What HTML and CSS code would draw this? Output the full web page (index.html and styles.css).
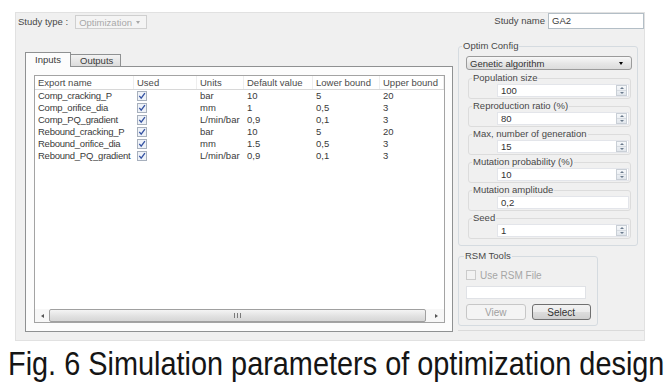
FILE: index.html
```html
<!DOCTYPE html>
<html>
<head>
<meta charset="utf-8">
<title>Study</title>
<link rel="stylesheet" href="styles.css">
</head>
<body>
<div class="panel">
  <div class="toprow">
    <div class="study-type">
      <span class="lbl">Study type :</span>
      <div class="combo combo-dis"><span>Optimization</span><span class="caret"></span></div>
    </div>
    <div class="study-name">
      <span class="lbl">Study name</span>
      <div class="namefield">GA2</div>
    </div>
  </div>
  <div class="main">
    <div class="tabs">
      <div class="tabbar">
        <div class="tab active">Inputs</div>
        <div class="tab">Outputs</div>
        <div class="tabfill"></div>
      </div>
      <div class="pane">
        <div class="table">
          <div class="trow thead">
            <div class="c">Export name</div>
            <div class="c">Used</div>
            <div class="c">Units</div>
            <div class="c">Default value</div>
            <div class="c">Lower bound</div>
            <div class="c">Upper bound</div>
          </div>
          <div class="tbody">
            <div class="trow">
              <div class="c name">Comp_cracking_P</div>
              <div class="c"><span class="cb"><svg width="10" height="10" viewBox="0 0 10 10"><rect x="0.5" y="0.5" width="9" height="9" fill="#eef2f8" stroke="#a7b0bd"/><path d="M2.3 4.8 L4.2 7.2 L7.9 2.1" fill="none" stroke="#3553a3" stroke-width="1.3"/></svg></span></div>
              <div class="c">bar</div>
              <div class="c">10</div>
              <div class="c">5</div>
              <div class="c">20</div>
            </div>
            <div class="trow">
              <div class="c name">Comp_orifice_dia</div>
              <div class="c"><span class="cb"><svg width="10" height="10" viewBox="0 0 10 10"><rect x="0.5" y="0.5" width="9" height="9" fill="#eef2f8" stroke="#a7b0bd"/><path d="M2.3 4.8 L4.2 7.2 L7.9 2.1" fill="none" stroke="#3553a3" stroke-width="1.3"/></svg></span></div>
              <div class="c">mm</div>
              <div class="c">1</div>
              <div class="c">0,5</div>
              <div class="c">3</div>
            </div>
            <div class="trow">
              <div class="c name">Comp_PQ_gradient</div>
              <div class="c"><span class="cb"><svg width="10" height="10" viewBox="0 0 10 10"><rect x="0.5" y="0.5" width="9" height="9" fill="#eef2f8" stroke="#a7b0bd"/><path d="M2.3 4.8 L4.2 7.2 L7.9 2.1" fill="none" stroke="#3553a3" stroke-width="1.3"/></svg></span></div>
              <div class="c">L/min/bar</div>
              <div class="c">0,9</div>
              <div class="c">0,1</div>
              <div class="c">3</div>
            </div>
            <div class="trow">
              <div class="c name">Rebound_cracking_P</div>
              <div class="c"><span class="cb"><svg width="10" height="10" viewBox="0 0 10 10"><rect x="0.5" y="0.5" width="9" height="9" fill="#eef2f8" stroke="#a7b0bd"/><path d="M2.3 4.8 L4.2 7.2 L7.9 2.1" fill="none" stroke="#3553a3" stroke-width="1.3"/></svg></span></div>
              <div class="c">bar</div>
              <div class="c">10</div>
              <div class="c">5</div>
              <div class="c">20</div>
            </div>
            <div class="trow">
              <div class="c name">Rebound_orifice_dia</div>
              <div class="c"><span class="cb"><svg width="10" height="10" viewBox="0 0 10 10"><rect x="0.5" y="0.5" width="9" height="9" fill="#eef2f8" stroke="#a7b0bd"/><path d="M2.3 4.8 L4.2 7.2 L7.9 2.1" fill="none" stroke="#3553a3" stroke-width="1.3"/></svg></span></div>
              <div class="c">mm</div>
              <div class="c">1.5</div>
              <div class="c">0,5</div>
              <div class="c">3</div>
            </div>
            <div class="trow">
              <div class="c name">Rebound_PQ_gradient</div>
              <div class="c"><span class="cb"><svg width="10" height="10" viewBox="0 0 10 10"><rect x="0.5" y="0.5" width="9" height="9" fill="#eef2f8" stroke="#a7b0bd"/><path d="M2.3 4.8 L4.2 7.2 L7.9 2.1" fill="none" stroke="#3553a3" stroke-width="1.3"/></svg></span></div>
              <div class="c">L/min/bar</div>
              <div class="c">0,9</div>
              <div class="c">0,1</div>
              <div class="c">3</div>
            </div>
          </div>
          <div class="hscroll">
            <div class="sbtn"><span class="arr-l"></span></div>
            <div class="thumb"><span class="grip"><i></i><i></i><i></i></span></div>
            <div class="sbtn sbtn-r"><span class="arr-r"></span></div>
          </div>
        </div>
      </div>
    </div>
    <div class="side">
      <fieldset class="group optim">
        <legend>Optim Config</legend>
        <div class="gbody optim-body">
          <div class="combo combo-en"><span>Genetic algorithm</span><span class="caret"></span></div>
          <fieldset class="sub first">
            <legend>Population size</legend>
            <div class="input"><span>100</span><span class="spin"><i class="up"></i><i class="dn"></i></span></div>
          </fieldset>
          <fieldset class="sub">
            <legend>Reproduction ratio (%)</legend>
            <div class="input"><span>80</span><span class="spin"><i class="up"></i><i class="dn"></i></span></div>
          </fieldset>
          <fieldset class="sub">
            <legend>Max, number of generation</legend>
            <div class="input"><span>15</span><span class="spin"><i class="up"></i><i class="dn"></i></span></div>
          </fieldset>
          <fieldset class="sub">
            <legend>Mutation probability (%)</legend>
            <div class="input"><span>10</span><span class="spin"><i class="up"></i><i class="dn"></i></span></div>
          </fieldset>
          <fieldset class="sub">
            <legend>Mutation amplitude</legend>
            <div class="input"><span>0,2</span></div>
          </fieldset>
          <fieldset class="sub">
            <legend>Seed</legend>
            <div class="input"><span>1</span><span class="spin"><i class="up"></i><i class="dn"></i></span></div>
          </fieldset>
        </div>
      </fieldset>
      <fieldset class="group rsm">
        <legend>RSM Tools</legend>
        <div class="gbody rsm-body">
          <div class="chkrow"><span class="dcb"></span><span>Use RSM File</span></div>
          <div class="rsmfield"></div>
          <div class="btns">
            <div class="btn btn-dis">View</div>
            <div class="btn">Select</div>
          </div>
        </div>
      </fieldset>
    </div>
  </div>
</div>
<div class="caption"><span class="captext">Fig. 6 Simulation parameters of optimization design</span></div>
</body>
</html>
```

FILE: styles.css
```css
* { box-sizing: border-box; }
html, body { margin: 0; padding: 0; background: #fff; }
body {
  width: 671px;
  height: 390px;
  overflow: hidden;
  font-family: "Liberation Sans", Arial, sans-serif;
  font-size: 9.5px;
  color: #484848;
}

.panel {
  margin: 12px 0 0 15px;
  width: 630px;
  height: 329px;
  background: #f0f0f0;
  border: 1px solid #e1e1e1;
  display: flex;
  flex-direction: column;
}

/* top row */
.toprow {
  display: flex;
  justify-content: space-between;
  align-items: flex-start;
  padding-left: 2px;
  height: 16px;
}
.lbl { line-height: 14px; white-space: nowrap; }
.study-type {
  display: flex;
  align-items: center;
  margin-top: 2px;
  height: 14px;
}
.combo {
  display: flex;
  align-items: center;
  height: 14px;
  padding: 0 5px 0 3px;
  white-space: nowrap;
}
.combo .caret {
  margin-left: auto;
  width: 0;
  height: 0;
  border-left: 2.5px solid transparent;
  border-right: 2.5px solid transparent;
  border-top: 3px solid #000;
}
.combo-dis {
  margin-left: 7px;
  width: 72px;
  border: 1px solid #cfcfcf;
  background: #f4f4f4;
  color: #a8a8a8;
}
.combo-dis .caret { border-top-color: #a8a8a8; margin-right: 1px; }
.study-name {
  display: flex;
  align-items: center;
  height: 16px;
}
.study-name .lbl { line-height: 16px; margin-right: 3px; }
.namefield {
  width: 96px;
  height: 16px;
  line-height: 14px;
  padding-left: 3px;
  background: #fff;
  border: 1px solid #b3bec6;
  color: #3a3a3a;
}

/* main */
.main {
  display: flex;
  align-items: flex-start;
  margin-top: 12px;
  padding-left: 9px;
}

/* tabs */
.tabs {
  width: 428px;
  margin-top: 11px;
}
.tabbar {
  display: flex;
  align-items: flex-end;
  height: 15px;
}
.tab {
  white-space: nowrap;
  color: #3a3a3a;
}
.tab.active {
  width: 46px;
  height: 15px;
  line-height: 14px;
  padding-left: 9px;
  background: #fcfcfc;
  border: 1px solid #8f9192;
  border-bottom: none;
}
.tab:not(.active) {
  width: 50px;
  height: 13px;
  line-height: 11px;
  padding-left: 9px;
  background: linear-gradient(#f3f3f3, #dcdcdc);
  border: 1px solid #8f9192;
  border-left: none;
}
.tabfill {
  flex: 1;
  height: 1px;
  background: #8f9192;
}
.pane {
  height: 265px;
  background: #fcfcfc;
  border: 1px solid #8f9192;
  border-top: none;
  padding: 8px 7px 8px 8px;
}

/* table */
.table {
  height: 248px;
  border: 1px solid #a3a3a3;
  background: #fff;
  display: flex;
  flex-direction: column;
  color: #3a3a3a;
}
.trow {
  display: grid;
  grid-template-columns: 99px 63px 47px 69px 67px 1fr;
  height: 12px;
  line-height: 12px;
}
.thead {
  height: 14px;
  line-height: 13px;
  border-bottom: 1px solid #d8d8d8;
  color: #4a4a4a;
}
.thead .c { border-right: 1px solid #eeeeee; }
.c {
  padding-left: 3px;
  white-space: nowrap;
  overflow: visible;
  min-width: 0;
}
.c.name { letter-spacing: -0.25px; }
.tbody { flex: 1; }
.cb {
  display: flex;
  align-items: center;
  height: 12px;
}
.cb svg { display: block; }

/* scrollbar */
.hscroll {
  height: 13px;
  display: flex;
  background: #f7f7f7;
}
.sbtn {
  width: 14px;
  display: flex;
  align-items: center;
  justify-content: center;
}
.sbtn-r { flex: 1; }
.arr-l, .arr-r {
  width: 0; height: 0;
  border-top: 2.5px solid transparent;
  border-bottom: 2.5px solid transparent;
}
.arr-l { border-right: 3px solid #555; }
.arr-r { border-left: 3px solid #555; margin-left: 2px; }
.thumb {
  width: 377px;
  border: 1px solid #a0a0a0;
  border-radius: 2px;
  background: linear-gradient(#f4f4f4, #e0e0e0 60%, #d6d6d6);
  display: flex;
  align-items: center;
  justify-content: center;
}
.grip { display: flex; gap: 2px; height: 5px; }
.grip i { width: 1px; background: #7a7a7a; }

/* side */
.side {
  width: 186px;
  height: 290px;
  margin-left: 5px;
  display: flex;
  flex-direction: column;
  align-items: flex-start;
  border-bottom: 1px solid #dadada;
}
fieldset {
  margin: 0;
  padding: 0;
  min-width: 0;
  border: 1px solid #d5dbe0;
  border-radius: 3px;
}
legend {
  padding: 0 1px;
  line-height: 10px;
  font-size: 9.5px;
  color: #484848;
  white-space: nowrap;
}
.group.optim { width: 180px; }
.group.optim > legend { margin-left: 3px; }
.optim-body { padding: 5px 5px 6px 7px; }
.combo-en {
  width: 100%;
  border: 1px solid #9b9b9b;
  border-radius: 3px;
  background: linear-gradient(#f8f8f8, #e6e6e6 55%, #dcdcdc);
  color: #333;
  padding-right: 8px;
}
.sub {
  margin: 2px 1px 0 2px;
  padding: 1px 0 1px 0;
  height: 26px;
  border-color: #dcdcdc;
}
.sub.first { margin-top: 3px; }
.sub > legend { margin-left: 3px; }
.input {
  margin-left: 28px;
  margin-right: 1px;
  height: 13px;
  background: #fff;
  border: 1px solid #e3e5ea;
  display: flex;
  align-items: center;
  padding-left: 3px;
  color: #333;
  line-height: 11px;
}
.spin {
  margin-left: auto;
  margin-right: 1px;
  width: 11px;
  height: 11px;
  display: flex;
  flex-direction: column;
  border: 1px solid #c9cfd6;
  background: linear-gradient(#f6f8fa, #e1e6ec);
}
.spin i {
  flex: 1;
  display: flex;
  align-items: center;
  justify-content: center;
}
.spin i::before {
  content: "";
  width: 0; height: 0;
  border-left: 2px solid transparent;
  border-right: 2px solid transparent;
}
.spin .up::before { border-bottom: 2px solid #6a7a8c; }
.spin .dn::before { border-top: 2px solid #6a7a8c; }
.spin .up { border-bottom: 1px solid #d6dbe1; }

.group.rsm { width: 140px; margin-top: 5px; }
.group.rsm > legend { margin-left: 5px; }
.rsm-body { padding: 8px 6px 5px 7px; }
.chkrow {
  display: flex;
  align-items: center;
  height: 12px;
  color: #a6a6a6;
  font-size: 10px;
}
.dcb {
  width: 10px;
  height: 10px;
  border: 1px solid #cbcbcb;
  background: #f2f2f2;
  margin-right: 4px;
}
.rsmfield {
  margin-top: 5px;
  width: 120px;
  height: 13px;
  background: #fff;
  border: 1px solid #e0e2e6;
}
.btns {
  margin-top: 5px;
  display: flex;
  gap: 6px;
}
.btn {
  width: 60px;
  height: 16px;
  border: 1px solid #707070;
  border-radius: 3px;
  background: linear-gradient(#f2f2f2, #ebebeb 50%, #dddddd 51%, #cfcfcf);
  display: flex;
  align-items: center;
  justify-content: center;
  color: #333;
  font-size: 10px;
}
.btn-dis {
  border-color: #c7c7c7;
  background: #f4f4f4;
  color: #a0a0a0;
}

/* caption */
.caption {
  margin: 5px 0 0 8px;
  width: 660px;
  height: 38px;
  overflow: hidden;
  font-family: "Liberation Sans", Arial, sans-serif;
  font-size: 33px;
  line-height: 36px;
  color: #151515;
  white-space: nowrap;
}
.captext {
  display: inline-block;
  transform: scaleX(0.875);
  transform-origin: 0 0;
}
```
